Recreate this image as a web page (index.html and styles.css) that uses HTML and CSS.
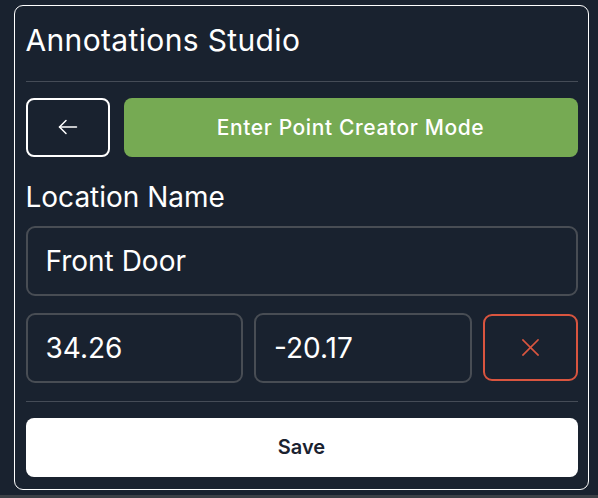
FILE: index.html
```html
<!DOCTYPE html>
<html lang="en">
<head>
<meta charset="utf-8">
<title>Annotations Studio</title>
<link rel="stylesheet" href="styles.css">
</head>
<body>
<div class="page">
  <div class="card">
    <h1 class="title">Annotations Studio</h1>
    <div class="divider"></div>
    <div class="actions">
      <button class="btn-back" aria-label="Back">
        <svg width="24" height="24" viewBox="0 0 24 24" fill="none" stroke="#ffffff" stroke-width="1.5" stroke-linecap="round" stroke-linejoin="round"><path d="M3.5 12h17"/><path d="M10 5.5L3.5 12l6.5 6.5"/></svg>
      </button>
      <button class="btn-mode">Enter Point Creator Mode</button>
    </div>
    <label class="label">Location Name</label>
    <div class="field field-name">Front Door</div>
    <div class="coords">
      <div class="field">34.26</div>
      <div class="field">-20.17</div>
      <button class="btn-clear" aria-label="Clear">
        <svg width="17" height="17" viewBox="0 0 17 17" fill="none" stroke="#d9553f" stroke-width="1.7" stroke-linecap="square"><path d="M1 1l15 15"/><path d="M16 1L1 16"/></svg>
      </button>
    </div>
    <div class="divider divider-bottom"></div>
    <button class="btn-save">Save</button>
  </div>
</div>
<div class="strip"></div>
</body>
</html>
```
FILE: styles.css
```css
* { box-sizing: border-box; }
html, body {
  margin: 0;
  padding: 0;
  background: #19222f;
  font-family: Inter, "Noto Sans", sans-serif;
  color: #ffffff;
}
.page {
  height: 495px;
  padding: 5px 9px 0 14px;
}
.strip {
  height: 3px;
  background: #3b4046;
}
.card {
  width: 575px;
  height: 485px;
  border: 1.5px solid #ffffff;
  border-radius: 9px;
  padding: 15.5px 10.5px 11.5px;
  display: flex;
  flex-direction: column;
}
.title {
  margin: 0;
  font-size: 30px;
  font-weight: 400;
  line-height: 36px;
  letter-spacing: 0.35px;
  flex-shrink: 0;
}
.divider {
  height: 1px;
  background: #454c57;
  margin-top: 23px;
  flex-shrink: 0;
}
.actions {
  display: flex;
  gap: 14px;
  margin-top: 16px;
  height: 59px;
  flex-shrink: 0;
}
.btn-back {
  width: 84px;
  height: 59px;
  border: 2px solid #ffffff;
  border-radius: 8px;
  background: transparent;
  display: flex;
  align-items: center;
  justify-content: center;
  padding: 0;
}
.btn-mode {
  flex: 1;
  height: 59px;
  border: none;
  border-radius: 8px;
  background: #76aa53;
  color: #ffffff;
  font-family: Inter, "Noto Sans", sans-serif;
  font-size: 21px;
  font-weight: 500;
  letter-spacing: 0.6px;
}
.label {
  margin-top: 23px;
  font-size: 28px;
  line-height: 34px;
  font-weight: 400;
  flex-shrink: 0;
}
.field {
  height: 70px;
  border: 2px solid #484d54;
  border-radius: 9px;
  display: flex;
  align-items: center;
  padding: 0 18px;
  font-size: 28px;
  color: #ffffff;
  flex-shrink: 0;
}
.field-name {
  margin-top: 12px;
}
.coords {
  display: grid;
  grid-template-columns: 1fr 1fr 95px;
  gap: 11px;
  margin-top: 17px;
  align-items: center;
  flex-shrink: 0;
}
.btn-clear {
  height: 67px;
  border: 2px solid #d9553f;
  border-radius: 9px;
  background: transparent;
  display: flex;
  align-items: center;
  justify-content: center;
  padding: 0;
}
.divider-bottom {
  margin-top: 18px;
}
.btn-save {
  margin-top: 16px;
  height: 59px;
  flex-shrink: 0;
  border: none;
  border-radius: 8px;
  background: #ffffff;
  color: #1a2230;
  font-family: Inter, "Noto Sans", sans-serif;
  font-size: 20px;
  font-weight: 600;
}
```
